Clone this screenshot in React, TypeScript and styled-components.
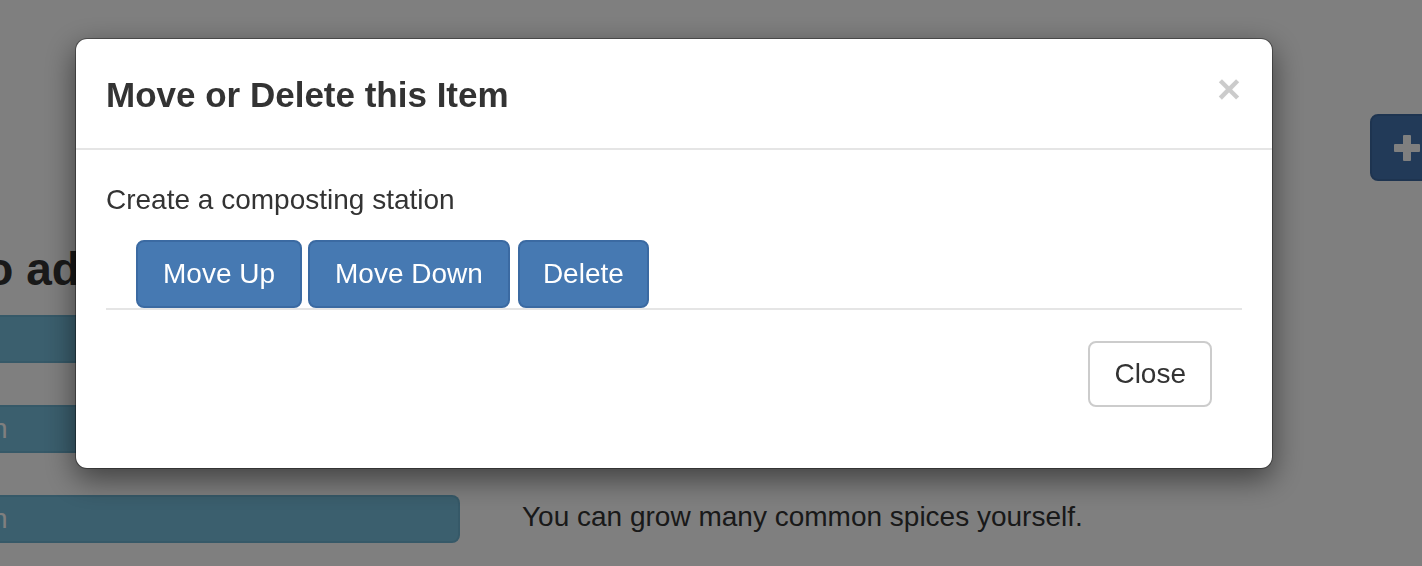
import React from "react";
import styled, { createGlobalStyle } from "styled-components";

const GlobalStyle = createGlobalStyle`
  html, body {
    margin: 0;
    padding: 0;
    overflow: hidden;
    background: #ffffff;
    font-family: "Liberation Sans", Arial, Helvetica, sans-serif;
    color: #333333;
  }
  * { box-sizing: border-box; }
`;

const Page = styled.div`
  width: 1422px;
  height: 566px;
  overflow: hidden;
  padding-top: 114px;
  display: flex;
  flex-direction: column;
`;

const TopBar = styled.div`
  display: flex;
  justify-content: flex-end;
  height: 67px;
`;

const AddButton = styled.div`
  width: 74px;
  height: 67px;
  margin-right: -22px;
  background: #4474b0;
  border: 2px solid #3d69a0;
  border-radius: 8px;
  display: flex;
  align-items: center;
  justify-content: center;
`;

const Heading = styled.h2`
  margin: 63px 0 0 -30px;
  font-size: 46px;
  line-height: 50.6px;
  font-weight: 700;
  color: #333333;
  white-space: nowrap;
`;

const Rows = styled.div`
  display: flex;
  flex-direction: column;
  gap: 42px;
  margin-top: 20px;
`;

const ItemRow = styled.div`
  display: flex;
  align-items: center;
  gap: 62px;
`;

const Bar = styled.div`
  width: 460px;
  height: 48px;
  flex: none;
  background: #76bedc;
  border: 2px solid #6cb2d0;
  border-left: none;
  border-radius: 0 8px 8px 0;
  display: flex;
  align-items: center;
  overflow: hidden;
`;

const BarText = styled.span`
  margin-left: -8px;
  font-size: 28px;
  line-height: 40px;
  color: #ffffff;
  white-space: nowrap;
`;

const RowText = styled.span`
  margin-bottom: 4px;
  font-size: 28px;
  line-height: 40px;
  color: #333333;
  white-space: nowrap;
`;

const Backdrop = styled.div`
  position: fixed;
  inset: 0;
  background: rgba(0, 0, 0, 0.5);
  padding: 38px 0 0 75px;
`;

const Modal = styled.div`
  width: 1198px;
  background: #ffffff;
  border: 1px solid rgba(0, 0, 0, 0.35);
  border-radius: 12px;
  box-shadow: 0 10px 30px rgba(0, 0, 0, 0.5);
  background-clip: padding-box;
`;

const ModalHeader = styled.div`
  display: flex;
  justify-content: space-between;
  align-items: flex-start;
  padding: 30px 30px 28px;
  border-bottom: 2px solid #e5e5e5;
`;

const ModalTitle = styled.h4`
  margin: 0;
  font-size: 35px;
  line-height: 51px;
  font-weight: 700;
  color: #333333;
`;

const CloseX = styled.span`
  font-size: 41px;
  line-height: 1;
  font-weight: 700;
  color: #000000;
  opacity: 0.2;
  margin-top: 0;
  margin-right: 1px;
  cursor: pointer;
`;

const ModalBody = styled.div`
  padding: 30px;
`;

const BodyText = styled.p`
  margin: 0 0 20px;
  font-size: 28px;
  line-height: 40px;
  color: #333333;
`;

const ActionList = styled.div`
  display: flex;
  gap: 6px;
  padding-left: 30px;
`;

const ActionButton = styled.button<{ $extra?: number; $padX?: number }>`
  margin-left: ${(p) => p.$extra ?? 0}px;
  font-family: inherit;
  font-size: 28px;
  line-height: 40px;
  padding: 12px ${(p) => p.$padX ?? 25}px;
  border: 2px solid #3b6aa2;
  border-radius: 8px;
  background: #4679b2;
  color: #ffffff;
  white-space: nowrap;
`;

const ModalFooter = styled.div`
  display: flex;
  justify-content: flex-end;
  padding: 31px 30px 31px;
  border-top: 2px solid #e5e5e5;
`;

const DefaultButton = styled.button`
  font-family: inherit;
  font-size: 28px;
  line-height: 40px;
  padding: 11px 24px;
  border: 2px solid #cccccc;
  border-radius: 8px;
  background: #ffffff;
  color: #333333;
`;

export default function App() {
  const rows = [
    { text: "Start small with a few easy vegetables." },
    { text: "Collect water for your garden beds." },
    { text: "You can grow many common spices yourself." },
  ];
  return (
    <>
      <GlobalStyle />
      <Page>
        <TopBar>
          <AddButton>
            <svg width="26" height="26" viewBox="0 0 26 26">
              <rect x="9" y="0" width="8" height="26" rx="1" fill="#ffffff" />
              <rect x="0" y="9" width="26" height="8" rx="1" fill="#ffffff" />
            </svg>
          </AddButton>
        </TopBar>
        <Heading>to add to your list</Heading>
        <Rows>
          {rows.map((r, i) => (
            <ItemRow key={i}>
              <Bar>{i > 0 && <BarText>n</BarText>}</Bar>
              <RowText>{r.text}</RowText>
            </ItemRow>
          ))}
        </Rows>
      </Page>
      <Backdrop>
        <Modal>
          <ModalHeader>
            <ModalTitle>Move or Delete this Item</ModalTitle>
            <CloseX>×</CloseX>
          </ModalHeader>
          <ModalBody>
            <BodyText>Create a composting station</BodyText>
            <ActionList>
              <ActionButton>Move Up</ActionButton>
              <ActionButton>Move Down</ActionButton>
              <ActionButton $extra={2} $padX={23}>Delete</ActionButton>
            </ActionList>
            <ModalFooter>
              <DefaultButton>Close</DefaultButton>
            </ModalFooter>
          </ModalBody>
        </Modal>
      </Backdrop>
    </>
  );
}
